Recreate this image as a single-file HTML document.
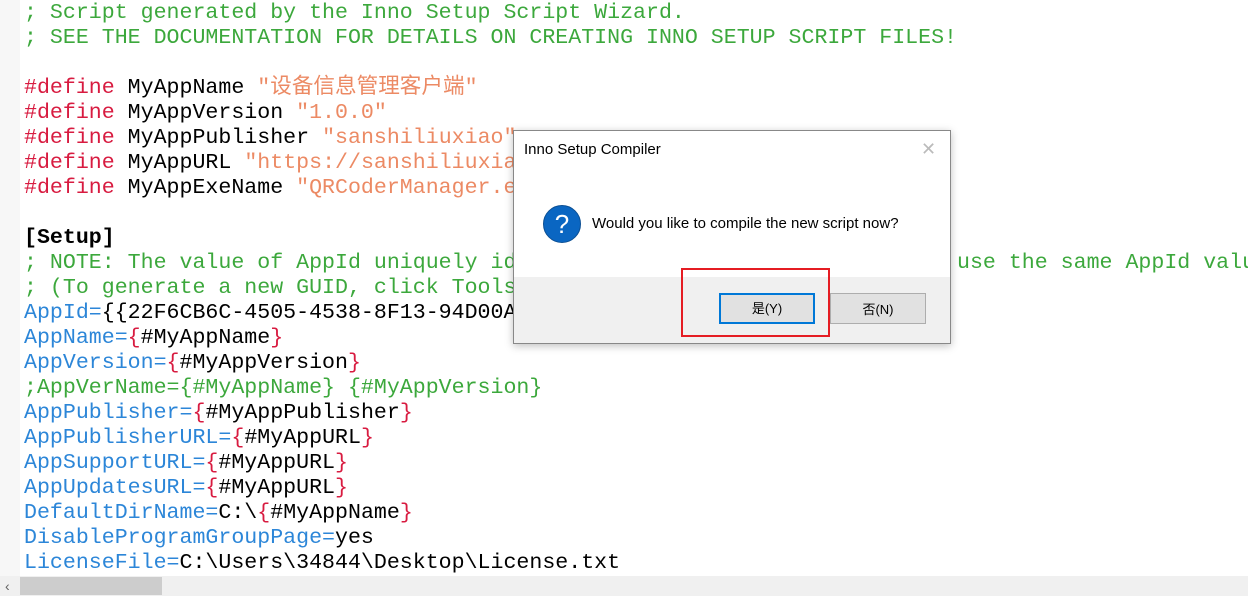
<!DOCTYPE html>
<html><head><meta charset="utf-8"><style>
body{margin:0;width:1248px;height:604px;overflow:hidden;background:#fff;position:relative;font-family:"Liberation Sans","Noto Sans CJK SC",sans-serif}
#gut{position:absolute;left:0;top:0;width:20px;height:576px;background:#f7f7f7}
#code{position:absolute;left:24px;top:1px;width:1224px;height:575px;overflow:hidden;font-family:"Liberation Mono","Noto Sans CJK SC",monospace;font-size:21.6px;line-height:25px;white-space:pre;color:#000}
.c{color:#3ca83c}.d{color:#d81b40}.s{color:#ec8a64}.k{color:#2c86d8}.r{color:#d81b40}
#sb{position:absolute;left:0;top:576px;width:1248px;height:20px;background:#f0f0f0}
#thumb{position:absolute;left:20px;top:577px;width:142px;height:18px;background:#cdcdcd}
#dlg{position:absolute;left:513px;top:130px;width:436px;height:212px;border:1px solid #888;background:#fff;box-shadow:0 2px 8px rgba(0,0,0,.25)}
#foot{position:absolute;left:0;top:146px;width:436px;height:66px;background:#f0f0f0}
.btn{position:absolute;top:162px;width:96px;height:31px;background:#e1e1e1;border:1px solid #adadad;font-size:13px;text-align:center;line-height:31px;box-sizing:border-box}
</style></head><body>
<div id="gut"></div>
<div id="code"><span class="c">; Script generated by the Inno Setup Script Wizard.
; SEE THE DOCUMENTATION FOR DETAILS ON CREATING INNO SETUP SCRIPT FILES!</span>

<span class="d">#define</span> MyAppName <span class="s">"设备信息管理客户端"</span>
<span class="d">#define</span> MyAppVersion <span class="s">"1.0.0"</span>
<span class="d">#define</span> MyAppPublisher <span class="s">"sanshiliuxiao"</span>
<span class="d">#define</span> MyAppURL <span class="s">"https://sanshiliuxiao.com/"</span>
<span class="d">#define</span> MyAppExeName <span class="s">"QRCoderManager.exe"</span>

<b>[Setup]</b>
<span class="c">; NOTE: The value of AppId uniquely identifies this application. Do not use the same AppId value in installers
; (To generate a new GUID, click Tools | Generate GUID inside the IDE.)</span>
<span class="k">AppId=</span>{{22F6CB6C-4505-4538-8F13-94D00A1234567}
<span class="k">AppName=</span><span class="r">{</span>#MyAppName<span class="r">}</span>
<span class="k">AppVersion=</span><span class="r">{</span>#MyAppVersion<span class="r">}</span>
<span class="c">;AppVerName={#MyAppName} {#MyAppVersion}</span>
<span class="k">AppPublisher=</span><span class="r">{</span>#MyAppPublisher<span class="r">}</span>
<span class="k">AppPublisherURL=</span><span class="r">{</span>#MyAppURL<span class="r">}</span>
<span class="k">AppSupportURL=</span><span class="r">{</span>#MyAppURL<span class="r">}</span>
<span class="k">AppUpdatesURL=</span><span class="r">{</span>#MyAppURL<span class="r">}</span>
<span class="k">DefaultDirName=</span>C:\<span class="r">{</span>#MyAppName<span class="r">}</span>
<span class="k">DisableProgramGroupPage=</span>yes
<span class="k">LicenseFile=</span>C:\Users\34844\Desktop\License.txt</div>
<div id="sb"></div><div id="thumb"></div>
<div style="position:absolute;left:5px;top:578px;font-size:14px;color:#606060">&#8249;</div>
<div id="dlg">
 <div style="position:absolute;left:10px;top:10px;font-size:15px;color:#000">Inno Setup Compiler</div>
 <div style="position:absolute;left:407px;top:8px;font-size:18px;color:#bbb">&#10005;</div>
 <div style="position:absolute;left:29px;top:74px;width:38px;height:38px;border-radius:50%;background:#0a66c2;border:1px solid #0b4f94;box-sizing:border-box;color:#fff;font-size:26px;text-align:center;line-height:36px">?</div>
 <div style="position:absolute;left:78px;top:84px;font-size:15px;color:#000">Would you like to compile the new script now?</div>
 <div id="foot"></div>
 <div class="btn" style="left:205px;border:2px solid #0078d7;line-height:27px">是(Y)</div>
 <div class="btn" style="left:316px">否(N)</div>
 <div style="position:absolute;left:167px;top:137px;width:149px;height:69px;border:2px solid #e51c23;box-sizing:border-box"></div>
</div>
</body></html>
